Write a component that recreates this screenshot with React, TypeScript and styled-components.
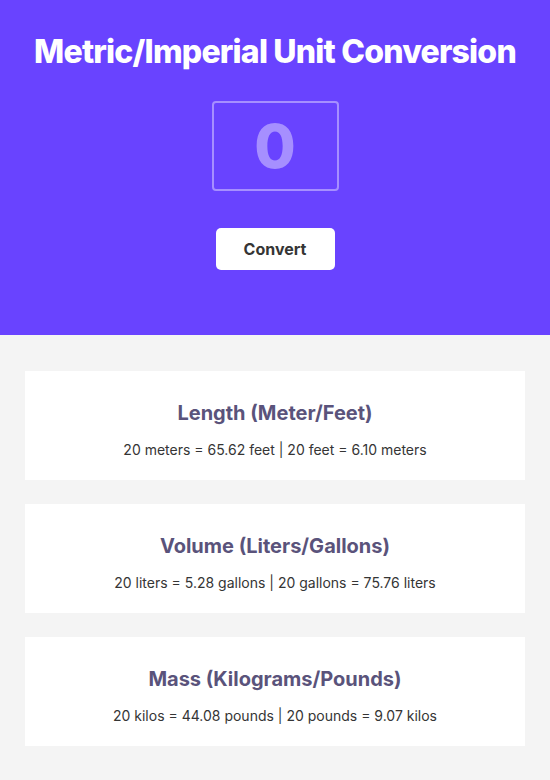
import styled, { createGlobalStyle } from 'styled-components';

const GlobalStyle = createGlobalStyle`
	* {
		box-sizing: border-box;
	}

	body {
		margin: 0;
		font-family: Inter, "Noto Sans", sans-serif;
		background-color: #f4f4f4;
	}
`;

const conversions = [
	{
		title: 'Length (Meter/Feet)',
		text: '20 meters = 65.62 feet | 20 feet = 6.10 meters',
	},
	{
		title: 'Volume (Liters/Gallons)',
		text: '20 liters = 5.28 gallons | 20 gallons = 75.76 liters',
	},
	{
		title: 'Mass (Kilograms/Pounds)',
		text: '20 kilos = 44.08 pounds | 20 pounds = 9.07 kilos',
	},
];

const App = () => {

	return (
		<>
			<GlobalStyle />

			<Header>
				<Title>Metric/Imperial Unit Conversion</Title>

				<NumberInput type='text' defaultValue='0' />

				<ConvertButton>Convert</ConvertButton>
			</Header>

			<Results>
				{conversions.map(item => (
					<Card key={item.title}>
						<CardTitle>{item.title}</CardTitle>
						<CardText>{item.text}</CardText>
					</Card>
				))}
			</Results>
		</>
	);
}

const Header = styled.header`
	height: 335px;

	display: flex;
	align-items: center;
	flex-direction: column;

	padding-top: 32px;

	background-color: #6943ff;
`;

const Title = styled.h1`
	margin: 0;

	color: #fff;
	font-size: 32px;
	font-weight: 800;
	letter-spacing: -0.8px;
`;

const NumberInput = styled.input`
	width: 127px;
	height: 90px;

	margin-top: 30px;

	border: 2px solid #a68fff;
	border-radius: 4px;
	background: transparent;

	color: #a68fff;
	font-family: Inter, sans-serif;
	font-size: 60px;
	font-weight: 800;
	text-align: center;

	outline: none;
`;

const ConvertButton = styled.button`
	width: 119px;
	height: 42px;

	margin-top: 37px;

	border: none;
	border-radius: 5px;
	background-color: #fff;

	color: #353535;
	font-family: Inter, sans-serif;
	font-size: 16px;
	font-weight: 700;
`;

const Results = styled.main`
	display: flex;
	flex-direction: column;

	gap: 24px;

	padding: 36px 25px;
`;

const Card = styled.section`
	height: 109px;

	display: flex;
	align-items: center;
	justify-content: center;
	flex-direction: column;

	gap: 16px;

	padding-top: 8px;

	background-color: #fff;
`;

const CardTitle = styled.h2`
	margin: 0;

	color: #5a537b;
	font-size: 20px;
	font-weight: 700;
`;

const CardText = styled.p`
	margin: 0;

	color: #353535;
	font-size: 14px;
`;

export default App;
